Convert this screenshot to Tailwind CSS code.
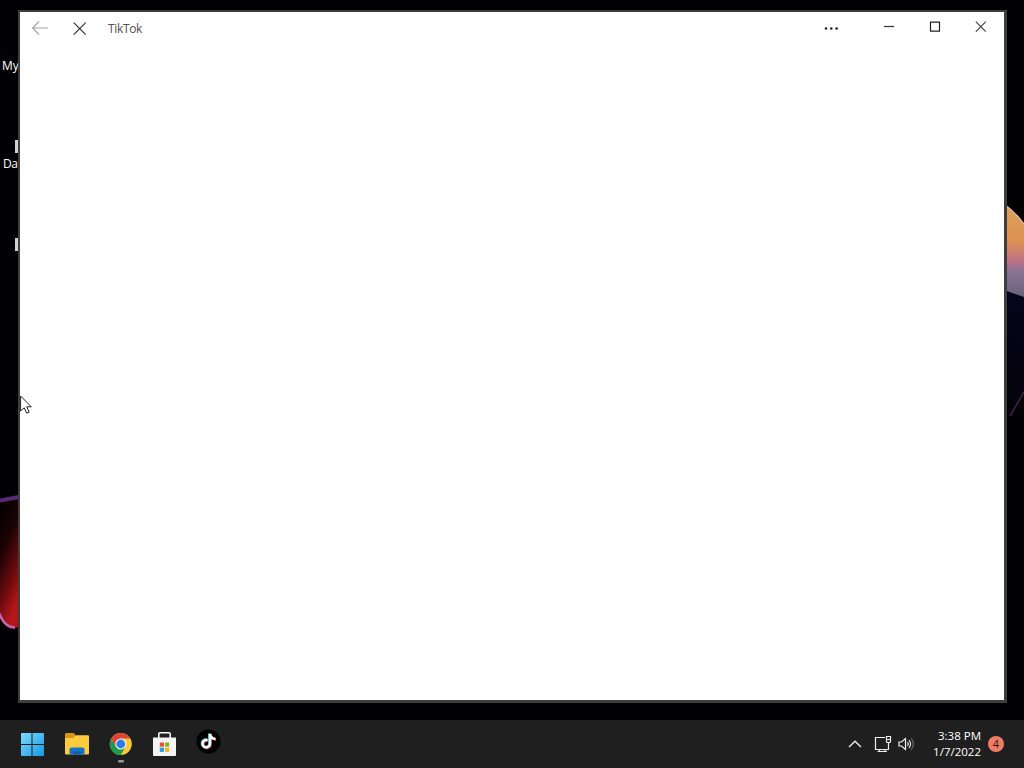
<!DOCTYPE html>
<html lang="en">
<head>
    <meta charset="UTF-8">
    <meta name="viewport" content="width=device-width, initial-scale=1.0">
    <title>TikTok</title>
    <script src="https://cdn.jsdelivr.net/npm/@tailwindcss/browser@4"></script>
</head>
<body class="bg-black font-['Open_Sans',sans-serif] overflow-hidden">
    <div class="w-[1024px] h-[768px] flex flex-col overflow-hidden">

        <!-- Desktop -->
        <main class="relative flex-1 bg-[#010104] overflow-hidden">
            <!-- Wallpaper -->
            <svg class="absolute inset-0" width="1024" height="720" viewBox="0 0 1024 720">
                <defs>
                    <linearGradient id="petal" x1="0" y1="0" x2="0" y2="1">
                        <stop offset="0" stop-color="#e0a05c"/>
                        <stop offset=".4" stop-color="#dc9152"/>
                        <stop offset=".62" stop-color="#bb7187"/>
                        <stop offset=".72" stop-color="#8a7494"/>
                        <stop offset="1" stop-color="#68627c"/>
                    </linearGradient>
                    <linearGradient id="red" x1="0" y1="0" x2=".35" y2="1">
                        <stop offset="0" stop-color="#020001"/>
                        <stop offset=".4" stop-color="#1c0204"/>
                        <stop offset=".75" stop-color="#6e0b0d"/>
                        <stop offset="1" stop-color="#b5161a"/>
                    </linearGradient>
                    <linearGradient id="navy" x1="0" y1="0" x2="0" y2="1">
                        <stop offset="0" stop-color="#05041a"/>
                        <stop offset="1" stop-color="#030109"/>
                    </linearGradient>
                </defs>
                <path d="M1004 290L1024 296V390L1010 417H1004Z" fill="url(#navy)"/>
                <path d="M1004 204Q1015 212 1024 224V297L1004 290Z" fill="url(#petal)"/>
                <path d="M1004 204Q1015 212 1024 224" fill="none" stroke="#e6b7a4" stroke-width="1.3"/>
                <path d="M1024 392L1010 416" stroke="#4a1d4c" stroke-width="1.500"/>
                <path d="M0 503L19 499V627Q8 631 0 614Z" fill="url(#red)"/>
                <path d="M0 500.500L19 497" stroke="#5c2776" stroke-width="4"/>
                <path d="M-1 613Q5 628 15 627.500" fill="none" stroke="#c765ae" stroke-width="2.500"/>
            </svg>

            <!-- Desktop icons -->
            <span class="absolute left-[2px] top-[58px] text-xs leading-4 text-white">My</span>
            <span class="absolute left-[3px] top-[156px] text-xs leading-4 text-white tracking-[-0.4px]">Da</span>
            <div class="absolute left-[15px] top-[140px] w-[3px] h-[13px] bg-[#d0d0d0]"></div>
            <div class="absolute left-[15px] top-[238px] w-[3px] h-[13px] bg-[#d0d0d0]"></div>

            <!-- App window -->
            <section class="absolute left-[18px] top-[10px] w-[989px] h-[693px] bg-white border-2 border-r-3 border-b-3 border-[#3c3e3f]">
                <header class="flex h-8 items-start pr-px text-[#333]">
                    <svg class="w-10 h-8" viewBox="0 0 40 32" fill="none" stroke="#a3a3a3" stroke-width="1.100">
                        <path d="M28 16H12.500M19 9.500L12.500 16L19 22.500"/>
                    </svg>
                    <svg class="w-10 h-8" viewBox="0 0 40 32" fill="none" stroke="#333" stroke-width="1.200">
                        <path d="M13.700 10.700L25.700 22.700M25.700 10.700L13.700 22.700"/>
                    </svg>
                    <span class="ml-2 mt-[9px] text-xs leading-4 text-[#505050] tracking-[-0.35px]">TikTok</span>
                    <svg class="ml-auto w-[42px] h-8" viewBox="0 0 42 32" fill="#222">
                        <circle cx="14" cy="16.500" r="1.300"/>
                        <circle cx="19.300" cy="16.500" r="1.300"/>
                        <circle cx="24.600" cy="16.500" r="1.300"/>
                    </svg>
                    <svg class="ml-[11px] w-[46px] h-8" viewBox="0 0 46 32" fill="none" stroke="#333">
                        <path d="M19 14.500H29" stroke-width="1.200"/>
                    </svg>
                    <svg class="w-[46px] h-8" viewBox="0 0 46 32" fill="none" stroke="#222" stroke-width="1.200">
                        <path d="M19.500 10.200H28.500V19.200H19.500Z"/>
                    </svg>
                    <svg class="w-[46px] h-8" viewBox="0 0 46 32" fill="none" stroke="#444" stroke-width="1.200">
                        <path d="M18.800 9.700L28.800 19.700M28.800 9.700L18.800 19.700"/>
                    </svg>
                </header>
            </section>

            <!-- Mouse cursor -->
            <svg class="absolute left-[20px] top-[395px]" width="13" height="20" viewBox="0 0 13 20">
                <path d="M.6 1V16L4.200 12.800L6.700 18.200L9.200 17.100L6.800 11.800H11.300Z" fill="#fff" stroke="#222" stroke-width="1"/>
            </svg>
        </main>

        <!-- Taskbar -->
        <footer class="h-12 bg-[#1f1f1f] flex items-center pl-[10px] pr-5 text-white">
            <div class="flex">
                <!-- Start -->
                <svg class="w-11 h-12" viewBox="0 0 44 48">
                    <defs>
                        <linearGradient id="win" x1="0" y1="0" x2="1" y2="1">
                            <stop offset="0" stop-color="#7bdcfc"/>
                            <stop offset="1" stop-color="#1797e6"/>
                        </linearGradient>
                    </defs>
                    <path d="M12 13H21.500V24H11V14Q11 13 12 13ZM22.500 13H33Q34 13 34 14V24H22.500ZM11 25H21.500V36H12Q11 36 11 35ZM22.500 25H34V35Q34 36 33 36H22.500Z" fill="url(#win)"/>
                </svg>
                <!-- File Explorer -->
                <svg class="w-11 h-12" viewBox="0 0 44 48">
                    <path d="M11 14Q11 13 12 13H19.500L22 15.500V21H11Z" fill="#d9950f"/>
                    <path d="M11 18H19L22 15.300H34Q35 15.300 35 16.300V33.500Q35 34.500 34 34.500H12Q11 34.500 11 33.500Z" fill="#fccb3e"/>
                    <path d="M15.500 34.500V29.500Q15.500 27.500 17.500 27.500H28.500Q30.500 27.500 30.500 29.500V34.500Z" fill="#1674c5"/>
                    <path d="M19 34.500V32.500Q19 31.500 20 31.500H26Q27 31.500 27 32.500V34.500Z" fill="#135ba5"/>
                </svg>
                <!-- Chrome -->
                <svg class="w-11 h-12" viewBox="0 0 44 48">
                    <circle cx="22.800" cy="24" r="11" fill="#fcc934"/>
                    <path d="M13.270 18.500A11 11 0 0 0 22.800 35L27.560 26.750L22.800 24L18.040 26.750Z" fill="#1e9a4a"/>
                    <path d="M22.800 18.500H32.330A11 11 0 0 0 13.270 18.500L18.040 26.750Z" fill="#dc4437"/>
                    <circle cx="22.800" cy="24" r="5.500" fill="#f4f4f4"/>
                    <circle cx="22.800" cy="24" r="4.400" fill="#2e7ce8"/>
                    <rect x="20" y="40" width="6" height="2.500" rx="1.200" fill="#9a9a9a"/>
                </svg>
                <!-- Microsoft Store -->
                <svg class="w-11 h-12" viewBox="0 0 44 48">
                    <path d="M16.800 18V14Q16.800 12.800 18 12.800H27Q28.200 12.800 28.200 14V18" fill="none" stroke="#f4f4f4" stroke-width="1.600"/>
                    <path d="M11 17.500H34V35Q34 36 33 36H12Q11 36 11 35Z" fill="#f3f3f3"/>
                    <path d="M17.800 22.500H22V26.700H17.800Z" fill="#e8502a"/>
                    <path d="M23 22.500H27.200V26.700H23Z" fill="#7fb51b"/>
                    <path d="M17.800 27.700H22V31.900H17.800Z" fill="#1d9fe0"/>
                    <path d="M23 27.700H27.200V31.900H23Z" fill="#f8b512"/>
                </svg>
                <!-- TikTok -->
                <svg class="w-11 h-12" viewBox="0 0 44 48">
                    <circle cx="22.500" cy="21.500" r="12" fill="#000"/>
                    <g fill="none" stroke-width="2.500">
                        <path d="M21.500 20.200A3.700 3.700 0 1 0 24 24V14Q24.700 18.800 29.500 19" stroke="#25e5df" transform="translate(-.6 -.4)"/>
                        <path d="M21.500 20.200A3.700 3.700 0 1 0 24 24V14Q24.700 18.800 29.500 19" stroke="#f52c55" transform="translate(.6 .5)"/>
                        <path d="M21.500 20.200A3.700 3.700 0 1 0 24 24V14Q24.700 18.800 29.500 19" stroke="#fff"/>
                    </g>
                </svg>
            </div>

            <!-- System tray -->
            <div class="ml-auto flex items-center">
                <svg class="w-6 h-12" viewBox="0 0 24 48" fill="none" stroke="#eee" stroke-width="1.400">
                    <path d="M6 27L12 21.300L18 27"/>
                </svg>
                <svg class="ml-1 w-6 h-12" viewBox="0 0 24 48" fill="none" stroke="#eee" stroke-width="1.200">
                    <path d="M14 17.500H4.500V29.500H17.500V23M8.500 29.500V31.500M14 29.500V31.500M6.500 31.500H16"/>
                    <path d="M15.500 16.500H19.500V21.500Q19.500 22.500 18.500 22.500H16.500Q15.500 22.500 15.500 21.500ZM15.500 19.500H19.500"/>
                </svg>
                <svg class="w-6 h-12" viewBox="0 0 24 48" fill="none" stroke="#eee" stroke-width="1.200">
                    <path d="M4 22H6.500L10.500 18.500V29.500L6.500 26H4Z"/>
                    <path d="M12.500 22Q14 24 12.500 26"/>
                    <path d="M14 20Q17 24 14 28"/>
                    <path d="M16.200 18.200Q20.500 24 16.200 29.800" stroke="#666"/>
                </svg>
                <div class="ml-3 w-[50px] text-right text-[11.500px] leading-4 whitespace-nowrap">
                    <div>3:38 PM</div>
                    <div>1/7/2022</div>
                </div>
                <div class="ml-[7px] size-4 rounded-full bg-[#f07c68] text-[#2c1512] text-[11px] leading-4 text-center">4</div>
            </div>
        </footer>
    </div>
</body>
</html>
